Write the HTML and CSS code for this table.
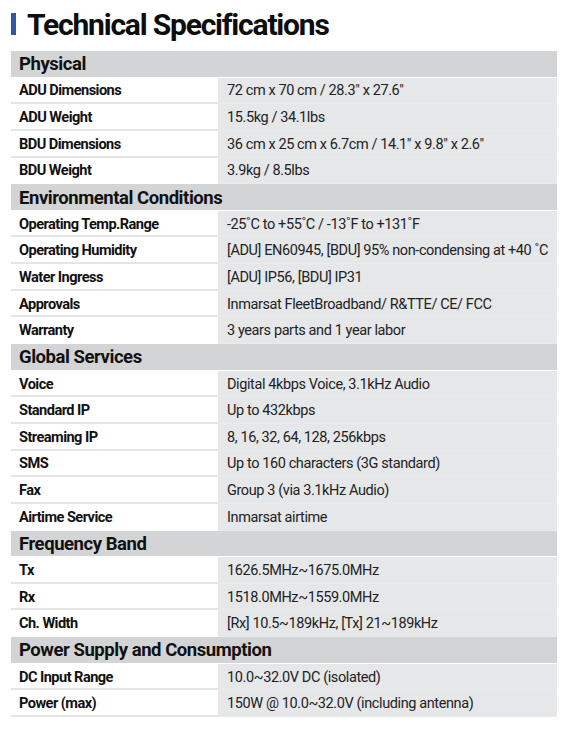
FILE: index.html
```html
<!DOCTYPE html>
<html>
<head>
<meta charset="utf-8">
<link rel="stylesheet" href="styles.css">
</head>
<body>
<div class="page">
  <h1 class="title"><span class="bar"></span>Technical Specifications</h1>
  <div class="specs">
    <div class="head">Physical</div>
    <div class="lab">ADU Dimensions</div><div class="val">72 cm x 70 cm / 28.3" x 27.6"</div>
    <div class="lab">ADU Weight</div><div class="val">15.5kg / 34.1lbs</div>
    <div class="lab">BDU Dimensions</div><div class="val">36 cm x 25 cm x 6.7cm / 14.1" x 9.8" x 2.6"</div>
    <div class="lab last">BDU Weight</div><div class="val">3.9kg / 8.5lbs</div>

    <div class="head">Environmental Conditions</div>
    <div class="lab">Operating Temp.Range</div><div class="val">-25˚C to +55˚C / -13˚F to +131˚F</div>
    <div class="lab">Operating Humidity</div><div class="val">[ADU] EN60945, [BDU] 95% non-condensing at +40 ˚C</div>
    <div class="lab">Water Ingress</div><div class="val">[ADU] IP56, [BDU] IP31</div>
    <div class="lab">Approvals</div><div class="val">Inmarsat FleetBroadband/ R&amp;TTE/ CE/ FCC</div>
    <div class="lab last">Warranty</div><div class="val">3 years parts and 1 year labor</div>

    <div class="head">Global Services</div>
    <div class="lab">Voice</div><div class="val">Digital 4kbps Voice, 3.1kHz Audio</div>
    <div class="lab">Standard IP</div><div class="val">Up to 432kbps</div>
    <div class="lab">Streaming IP</div><div class="val">8, 16, 32, 64, 128, 256kbps</div>
    <div class="lab">SMS</div><div class="val">Up to 160 characters (3G standard)</div>
    <div class="lab">Fax</div><div class="val">Group 3 (via 3.1kHz Audio)</div>
    <div class="lab last">Airtime Service</div><div class="val">Inmarsat airtime</div>

    <div class="head">Frequency Band</div>
    <div class="lab">Tx</div><div class="val">1626.5MHz~1675.0MHz</div>
    <div class="lab">Rx</div><div class="val">1518.0MHz~1559.0MHz</div>
    <div class="lab last">Ch. Width</div><div class="val">[Rx] 10.5~189kHz, [Tx] 21~189kHz</div>

    <div class="head">Power Supply and Consumption</div>
    <div class="lab">DC Input Range</div><div class="val">10.0~32.0V DC (isolated)</div>
    <div class="lab">Power (max)</div><div class="val">150W @ 10.0~32.0V (including antenna)</div>
  </div>
</div>
</body>
</html>
```
FILE: styles.css
```css
html, body {
  margin: 0;
  padding: 0;
  background: #ffffff;
}
.page {
  width: 565px;
  padding: 5px 0 0 11px;
  box-sizing: border-box;
  font-family: "Roboto", "Liberation Sans", sans-serif;
  color: #111;
}
.title {
  display: flex;
  align-items: center;
  margin: 0 0 8px 0;
  height: 38px;
  font-family: "Roboto", sans-serif;
  font-weight: 700;
  font-size: 30px;
  letter-spacing: -1.2px;
  color: #0d0d0d;
}
.bar {
  display: inline-block;
  width: 5px;
  height: 22px;
  background: #2f55a4;
  margin-right: 11px;
}
.specs {
  display: grid;
  grid-template-columns: 207px 339px;
  width: 546px;
}
.head {
  grid-column: 1 / 3;
  background: #d3d4d6;
  height: 25.65px;
  box-sizing: border-box;
  padding: 1px 0 0 8px;
  box-sizing: content-box;
  height: 24.65px;
  display: flex;
  align-items: center;
  font-weight: 700;
  font-size: 18.5px;
  letter-spacing: -0.45px;
  border-bottom: 1px solid #ffffff;
}
.lab {
  height: 23.65px;
  padding: 1px 0 0 8px;
  display: flex;
  align-items: center;
  font-weight: 700;
  font-size: 14.6px;
  letter-spacing: -0.55px;
  border-bottom: 2px solid #e4e5e7;
}
.lab.last {
  border-bottom-color: #ffffff;
}
.val {
  height: 24.65px;
  padding: 1px 0 0 9px;
  display: flex;
  align-items: center;
  font-size: 14.5px;
  letter-spacing: -0.4px;
  white-space: nowrap;
  background: #e6e7e9;
  border-bottom: 1px solid #e9eaec;
  color: #222;
}
```
